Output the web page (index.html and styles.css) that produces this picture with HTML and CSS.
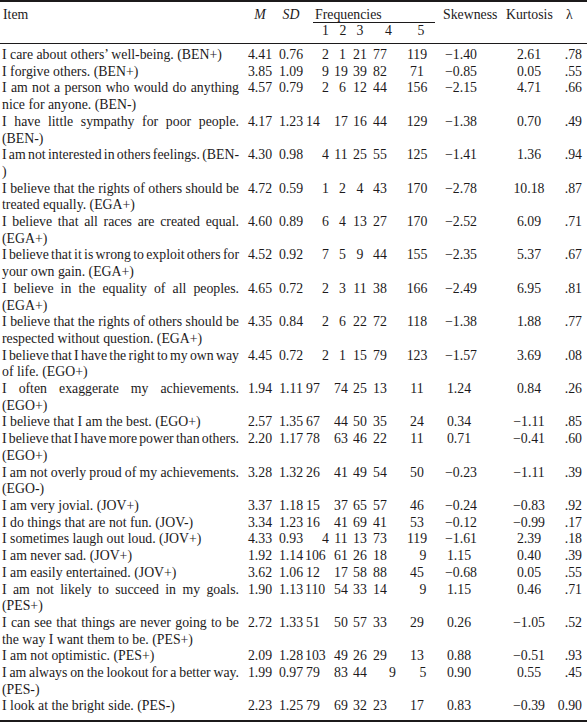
FILE: index.html
```html
<!DOCTYPE html>
<html lang="en">
<head>
  <meta charset="UTF-8" />
  <meta name="viewport" content="width=device-width, initial-scale=1.0" />
  <title>Item statistics</title>
  <link rel="stylesheet" href="styles.css">
</head>
<body>
  <div class="sheet">
    <div class="grid head">
      <div class="h-item">Item</div>
      <div class="h-m"><i>M</i></div>
      <div class="h-sd"><i>SD</i></div>
      <div class="h-freq"><div class="freq-label">Frequencies</div></div>
      <div class="h-skew">Skewness</div>
      <div class="h-kurt">Kurtosis</div>
      <div class="h-lam">&lambda;</div>
      <div class="h-sub n1">1</div>
      <div class="h-sub n2">2</div>
      <div class="h-sub n3">3</div>
      <div class="h-sub n4">4</div>
      <div class="h-sub n5">5</div>
    </div>
    <div class="grid body">
      <div class="row"><div class="item">I care about others’ well-being. (BEN+)</div><div class="m">4.41</div><div class="sd">0.76</div><div class="f1 s">2</div><div class="f2 s">1</div><div class="f3">21</div><div class="f4">77</div><div class="f5">119</div><div class="skew">&minus;1.40</div><div class="kurt">2.61</div><div class="lam">.78</div></div>
      <div class="row"><div class="item">I forgive others. (BEN+)</div><div class="m">3.85</div><div class="sd">1.09</div><div class="f1 s">9</div><div class="f2">19</div><div class="f3">39</div><div class="f4">82</div><div class="f5">71</div><div class="skew">&minus;0.85</div><div class="kurt">0.05</div><div class="lam">.55</div></div>
      <div class="row"><div class="item"><span class="j">I am not a person who would do anything</span>nice for anyone. (BEN-)</div><div class="m">4.57</div><div class="sd">0.79</div><div class="f1 s">2</div><div class="f2 s">6</div><div class="f3">12</div><div class="f4">44</div><div class="f5">156</div><div class="skew">&minus;2.15</div><div class="kurt">4.71</div><div class="lam">.66</div></div>
      <div class="row"><div class="item"><span class="j">I have little sympathy for poor people.</span>(BEN-)</div><div class="m">4.17</div><div class="sd">1.23</div><div class="f1">14</div><div class="f2">17</div><div class="f3">16</div><div class="f4">44</div><div class="f5">129</div><div class="skew">&minus;1.38</div><div class="kurt">0.70</div><div class="lam">.49</div></div>
      <div class="row"><div class="item"><span class="j">I am not interested in others feelings. (BEN-</span>)</div><div class="m">4.30</div><div class="sd">0.98</div><div class="f1 s">4</div><div class="f2">11</div><div class="f3">25</div><div class="f4">55</div><div class="f5">125</div><div class="skew">&minus;1.41</div><div class="kurt">1.36</div><div class="lam">.94</div></div>
      <div class="row"><div class="item"><span class="j">I believe that the rights of others should be</span>treated equally. (EGA+)</div><div class="m">4.72</div><div class="sd">0.59</div><div class="f1 s">1</div><div class="f2 s">2</div><div class="f3">4</div><div class="f4">43</div><div class="f5">170</div><div class="skew">&minus;2.78</div><div class="kurt">10.18</div><div class="lam">.87</div></div>
      <div class="row"><div class="item"><span class="j">I believe that all races are created equal.</span>(EGA+)</div><div class="m">4.60</div><div class="sd">0.89</div><div class="f1 s">6</div><div class="f2 s">4</div><div class="f3">13</div><div class="f4">27</div><div class="f5">170</div><div class="skew">&minus;2.52</div><div class="kurt">6.09</div><div class="lam">.71</div></div>
      <div class="row"><div class="item"><span class="j">I believe that it is wrong to exploit others for</span>your own gain. (EGA+)</div><div class="m">4.52</div><div class="sd">0.92</div><div class="f1 s">7</div><div class="f2 s">5</div><div class="f3">9</div><div class="f4">44</div><div class="f5">155</div><div class="skew">&minus;2.35</div><div class="kurt">5.37</div><div class="lam">.67</div></div>
      <div class="row"><div class="item"><span class="j">I believe in the equality of all peoples.</span>(EGA+)</div><div class="m">4.65</div><div class="sd">0.72</div><div class="f1 s">2</div><div class="f2 s">3</div><div class="f3">11</div><div class="f4">38</div><div class="f5">166</div><div class="skew">&minus;2.49</div><div class="kurt">6.95</div><div class="lam">.81</div></div>
      <div class="row"><div class="item"><span class="j">I believe that the rights of others should be</span>respected without question. (EGA+)</div><div class="m">4.35</div><div class="sd">0.84</div><div class="f1 s">2</div><div class="f2 s">6</div><div class="f3">22</div><div class="f4">72</div><div class="f5">118</div><div class="skew">&minus;1.38</div><div class="kurt">1.88</div><div class="lam">.77</div></div>
      <div class="row"><div class="item"><span class="j">I believe that I have the right to my own way</span>of life. (EGO+)</div><div class="m">4.45</div><div class="sd">0.72</div><div class="f1 s">2</div><div class="f2 s">1</div><div class="f3">15</div><div class="f4">79</div><div class="f5">123</div><div class="skew">&minus;1.57</div><div class="kurt">3.69</div><div class="lam">.08</div></div>
      <div class="row"><div class="item"><span class="j">I often exaggerate my achievements.</span>(EGO+)</div><div class="m">1.94</div><div class="sd">1.11</div><div class="f1">97</div><div class="f2">74</div><div class="f3">25</div><div class="f4">13</div><div class="f5">11</div><div class="skew">1.24</div><div class="kurt">0.84</div><div class="lam">.26</div></div>
      <div class="row"><div class="item">I believe that I am the best. (EGO+)</div><div class="m">2.57</div><div class="sd">1.35</div><div class="f1">67</div><div class="f2">44</div><div class="f3">50</div><div class="f4">35</div><div class="f5">24</div><div class="skew">0.34</div><div class="kurt">&minus;1.11</div><div class="lam">.85</div></div>
      <div class="row"><div class="item"><span class="j">I believe that I have more power than others.</span>(EGO+)</div><div class="m">2.20</div><div class="sd">1.17</div><div class="f1">78</div><div class="f2">63</div><div class="f3">46</div><div class="f4">22</div><div class="f5">11</div><div class="skew">0.71</div><div class="kurt">&minus;0.41</div><div class="lam">.60</div></div>
      <div class="row"><div class="item"><span class="j">I am not overly proud of my achievements.</span>(EGO-)</div><div class="m">3.28</div><div class="sd">1.32</div><div class="f1">26</div><div class="f2">41</div><div class="f3">49</div><div class="f4">54</div><div class="f5">50</div><div class="skew">&minus;0.23</div><div class="kurt">&minus;1.11</div><div class="lam">.39</div></div>
      <div class="row"><div class="item">I am very jovial. (JOV+)</div><div class="m">3.37</div><div class="sd">1.18</div><div class="f1">15</div><div class="f2">37</div><div class="f3">65</div><div class="f4">57</div><div class="f5">46</div><div class="skew">&minus;0.24</div><div class="kurt">&minus;0.83</div><div class="lam">.92</div></div>
      <div class="row"><div class="item">I do things that are not fun. (JOV-)</div><div class="m">3.34</div><div class="sd">1.23</div><div class="f1">16</div><div class="f2">41</div><div class="f3">69</div><div class="f4">41</div><div class="f5">53</div><div class="skew">&minus;0.12</div><div class="kurt">&minus;0.99</div><div class="lam">.17</div></div>
      <div class="row"><div class="item">I sometimes laugh out loud. (JOV+)</div><div class="m">4.33</div><div class="sd">0.93</div><div class="f1 s">4</div><div class="f2">11</div><div class="f3">13</div><div class="f4">73</div><div class="f5">119</div><div class="skew">&minus;1.61</div><div class="kurt">2.39</div><div class="lam">.18</div></div>
      <div class="row"><div class="item">I am never sad. (JOV+)</div><div class="m">1.92</div><div class="sd">1.14</div><div class="f1 t">106</div><div class="f2">61</div><div class="f3">26</div><div class="f4">18</div><div class="f5 s">9</div><div class="skew">1.15</div><div class="kurt">0.40</div><div class="lam">.39</div></div>
      <div class="row"><div class="item">I am easily entertained. (JOV+)</div><div class="m">3.62</div><div class="sd">1.06</div><div class="f1">12</div><div class="f2">17</div><div class="f3">58</div><div class="f4">88</div><div class="f5">45</div><div class="skew">&minus;0.68</div><div class="kurt">0.05</div><div class="lam">.55</div></div>
      <div class="row"><div class="item"><span class="j">I am not likely to succeed in my goals.</span>(PES+)</div><div class="m">1.90</div><div class="sd">1.13</div><div class="f1 t">110</div><div class="f2">54</div><div class="f3">33</div><div class="f4">14</div><div class="f5 s">9</div><div class="skew">1.15</div><div class="kurt">0.46</div><div class="lam">.71</div></div>
      <div class="row"><div class="item"><span class="j">I can see that things are never going to be</span>the way I want them to be. (PES+)</div><div class="m">2.72</div><div class="sd">1.33</div><div class="f1">51</div><div class="f2">50</div><div class="f3">57</div><div class="f4">33</div><div class="f5">29</div><div class="skew">0.26</div><div class="kurt">&minus;1.05</div><div class="lam">.52</div></div>
      <div class="row"><div class="item">I am not optimistic. (PES+)</div><div class="m">2.09</div><div class="sd">1.28</div><div class="f1 t">103</div><div class="f2">49</div><div class="f3">26</div><div class="f4">29</div><div class="f5">13</div><div class="skew">0.88</div><div class="kurt">&minus;0.51</div><div class="lam">.93</div></div>
      <div class="row"><div class="item"><span class="j">I am always on the lookout for a better way.</span>(PES-)</div><div class="m">1.99</div><div class="sd">0.97</div><div class="f1">79</div><div class="f2">83</div><div class="f3">44</div><div class="f4 s">9</div><div class="f5 s">5</div><div class="skew">0.90</div><div class="kurt">0.55</div><div class="lam">.45</div></div>
      <div class="row"><div class="item">I look at the bright side. (PES-)</div><div class="m">2.23</div><div class="sd">1.25</div><div class="f1">79</div><div class="f2">69</div><div class="f3">32</div><div class="f4">23</div><div class="f5">17</div><div class="skew">0.83</div><div class="kurt">&minus;0.39</div><div class="lam">0.90</div></div>
    </div>
  </div>
</body>
</html>
```

FILE: styles.css
```css
body {
  margin: 0;
  background: #fff;
  color: #1c1a1b;
  font-family: "Liberation Serif", "Times New Roman", serif;
  font-size: 13.8px;
}
.sheet {
  width: 587px;
  border-top: 2px solid #1c1a1b;
  border-bottom: 2px solid #1c1a1b;
}
.grid {
  display: grid;
  grid-template-columns: 244px 32px 30px 27px 16px 22px 18px 56px 61px 46px 35px;
  white-space: nowrap;
}
.row {
  display: contents;
}

/* header */
.head {
  line-height: 16px;
  border-bottom: 1px solid #1c1a1b;
  text-align: center;
}
.head > div {
  padding-top: 5px;
}
.h-item, .h-m, .h-sd, .h-skew, .h-kurt, .h-lam {
  grid-row: span 2;
}
.h-item {
  text-align: left;
  padding-left: 3px;
}
.h-freq {
  grid-column: span 5;
  text-align: left;
}
.freq-label {
  margin: 0 10px 0 7px;
  padding-left: 2px;
  line-height: 15px;
  border-bottom: 1px solid #1c1a1b;
}
.head > .h-sub {
  padding: 0 0 4px;
}
.head > .n1 {
  text-align: left;
  padding-left: 16px;
}
.head > .n2 { padding-left: 4px; }
.head > .n4 { padding-left: 14px; }
.head > .n5 { padding-left: 8px; }
.h-skew {
  text-align: left;
  margin-left: -2px;
}
.h-lam {
  text-align: left;
  padding-left: 14px;
}

/* body */
.body {
  line-height: 16.7px;
  padding: 3px 0 5px;
  text-align: center;
}
.item {
  text-align: left;
  white-space: normal;
  padding: 0 5px 0 2px;
}
.j {
  display: block;
  white-space: nowrap;
  word-spacing: -3px;
  text-align: justify;
  text-align-last: justify;
}
.f1 {
  text-align: left;
}
.f1.s { padding-left: 16px; }
.f1.t { margin-left: -1px; }
.f2.s { padding-left: 3px; }
.f4.s { padding-left: 18px; }
.f5.s { padding-left: 12px; }
.skew {
  padding-right: 33px;
}
.lam {
  text-align: right;
  padding-right: 5px;
}
```
